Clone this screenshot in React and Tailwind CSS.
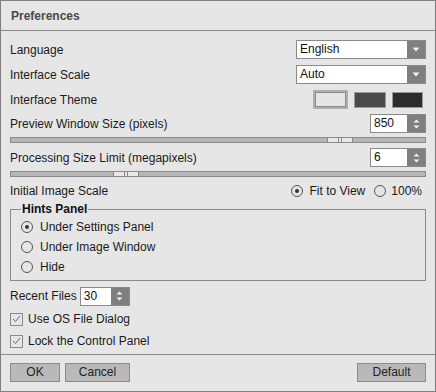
import React from 'react';

const font = { fontFamily: '"Liberation Sans", Arial, sans-serif' };

const DownArrow = () => (
  <svg width="8" height="5" viewBox="0 0 8 5">
    <path d="M0.5 0.5 H7.5 L4 4.5 Z" fill="#f2f2f2" />
  </svg>
);

const SpinArrows = () => (
  <svg width="7" height="10" viewBox="0 0 7 10">
    <path d="M0.5 3.5 L3.5 0.5 L6.5 3.5 Z" fill="#f2f2f2" />
    <path d="M0.5 6.5 L3.5 9.5 L6.5 6.5 Z" fill="#f2f2f2" />
  </svg>
);

const Dropdown = ({ value }) => (
  <div className="flex h-[19px] w-[130px] border border-[#8a8a8a] bg-white">
    <span className="flex-1 pl-[3px] leading-[17px] text-[#111]">{value}</span>
    <span className="flex w-[18px] items-center justify-center bg-[#7f7f7f]">
      <DownArrow />
    </span>
  </div>
);

const SpinBox = ({ value, width }) => (
  <div className={`flex h-[19px] border border-[#8a8a8a] bg-white ${width}`}>
    <span className="flex-1 pl-[3px] leading-[17px] text-[#111]">{value}</span>
    <span className="flex w-[18px] items-center justify-center bg-[#7f7f7f]">
      <SpinArrows />
    </span>
  </div>
);

const Slider = ({ thumbLeft }) => (
  <div className="relative h-[6px] w-full border border-[#8a8a8a] bg-[#b6b6b6]">
    <div
      className={`absolute top-[-1px] flex h-[6px] w-[26px] items-center justify-center gap-[2px] border border-[#8a8a8a] bg-[#e8e8e8] ${thumbLeft}`}
    >
      <span className="h-full w-px bg-[#8a8a8a]" />
      <span className="h-full w-px bg-[#8a8a8a]" />
    </div>
  </div>
);

const Radio = ({ checked }) => (
  <span className="flex h-[12px] w-[12px] shrink-0 items-center justify-center rounded-full border border-[#555]">
    {checked && <span className="h-[4px] w-[4px] rounded-full bg-[#333]" />}
  </span>
);

const Checkbox = () => (
  <span className="flex h-[13px] w-[13px] shrink-0 items-center justify-center border border-[#8a8a8a]">
    <svg width="9" height="8" viewBox="0 0 9 8">
      <path d="M1 4 L3.5 6.5 L8 1" fill="none" stroke="#666" strokeWidth="1" />
    </svg>
  </span>
);

const Button = ({ children, width }) => (
  <button
    className={`h-[19px] border border-[#8c8c8c] bg-[#b9b9b9] text-[12px] leading-[17px] text-[#222] ${width}`}
    style={font}
  >
    {children}
  </button>
);

export default function App() {
  return (
    <div
      className="flex h-[392px] w-[436px] flex-col border border-[#7f7f7f] bg-[#e6e6e6] text-[12px] text-[#1a1a1a]"
      style={font}
    >
      <div className="flex h-[30px] items-center border-b border-[#8a8a8a] px-[10px]">
        <span className="text-[12px] font-bold text-[#4a4a4a]">Preferences</span>
      </div>

      <div className="flex flex-col px-[9px] pt-[9px]">
        <div className="flex h-[19px] items-center justify-between">
          <span>Language</span>
          <Dropdown value="English" />
        </div>

        <div className="mt-[6px] flex h-[19px] items-center justify-between">
          <span>Interface Scale</span>
          <Dropdown value="Auto" />
        </div>

        <div className="mt-[7px] flex h-[17px] items-center justify-between">
          <span>Interface Theme</span>
          <div className="flex items-center gap-[6px] pr-[3px]">
            <span className="h-[19px] w-[35px] border-2 border-[#b0b0b0] p-0">
              <span className="block h-full w-full border border-[#8a8a8a] bg-[#e6e6e6]" />
            </span>
            <span className="h-[16px] w-[32px] border border-[#9a9a9a] bg-[#4a4a4a]" />
            <span className="h-[16px] w-[31px] border border-[#9a9a9a] bg-[#2d2d2d]" />
          </div>
        </div>

        <div className="mt-[6px] flex h-[19px] items-center justify-between">
          <span>Preview Window Size (pixels)</span>
          <SpinBox value="850" width="w-[56px]" />
        </div>
        <div className="mt-[4px]">
          <Slider thumbLeft="left-[316px]" />
        </div>

        <div className="mt-[5px] flex h-[19px] items-center justify-between">
          <span>Processing Size Limit (megapixels)</span>
          <SpinBox value="6" width="w-[56px]" />
        </div>
        <div className="mt-[4px]">
          <Slider thumbLeft="left-[102px]" />
        </div>

        <div className="mt-[6px] flex h-[16px] items-center justify-between">
          <span>Initial Image Scale</span>
          <div className="flex items-center pr-[4px]">
            <Radio checked />
            <span className="ml-[6px]">Fit to View</span>
            <span className="ml-[9px]">
              <Radio />
            </span>
            <span className="ml-[5px]">100%</span>
          </div>
        </div>

        <fieldset className="mt-[3px] border border-[#8a8a8a] pb-[3px] pl-[10px] pt-[1px]">
          <legend className="px-[1px] text-[12px] font-bold leading-[14px] text-[#111]">Hints Panel</legend>
          <div className="flex h-[20px] items-center gap-[7px]">
            <Radio checked />
            <span>Under Settings Panel</span>
          </div>
          <div className="flex h-[20px] items-center gap-[7px]">
            <Radio />
            <span>Under Image Window</span>
          </div>
          <div className="flex h-[20px] items-center gap-[7px]">
            <Radio />
            <span>Hide</span>
          </div>
        </fieldset>

        <div className="mt-[6px] flex h-[18px] items-center gap-[3px]">
          <span>Recent Files</span>
          <SpinBox value="30" width="w-[50px]" />
        </div>

        <div className="mt-[6px] flex h-[16px] items-center gap-[5px]">
          <Checkbox />
          <span>Use OS File Dialog</span>
        </div>

        <div className="mt-[6px] flex h-[16px] items-center gap-[5px]">
          <Checkbox />
          <span>Lock the Control Panel</span>
        </div>
      </div>

      <div className="mt-auto flex items-center border-t border-[#8a8a8a] px-[9px] pb-[9px] pt-[8px]">
        <Button width="w-[50px]">OK</Button>
        <div className="ml-[5px]">
          <Button width="w-[65px]">Cancel</Button>
        </div>
        <div className="ml-auto">
          <Button width="w-[69px]">Default</Button>
        </div>
      </div>
    </div>
  );
}
